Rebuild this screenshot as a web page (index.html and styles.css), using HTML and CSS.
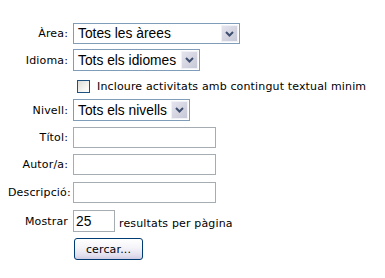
FILE: index.html
```html
<!DOCTYPE html>
<html>
<head>
<meta charset="utf-8">
<link rel="stylesheet" href="styles.css">
</head>
<body>
<form class="search">
  <div class="row r1">
    <label class="lbl">Àrea:</label>
    <div class="select w-area"><span class="val">Totes les àrees</span><span class="arrow"><svg width="9" height="6" viewBox="0 0 9 6"><polyline points="1,1 4.5,4.5 8,1" fill="none" stroke="#3e4f70" stroke-width="2"/></svg></span></div>
  </div>
  <div class="row r2">
    <label class="lbl">Idioma:</label>
    <div class="select w-lang"><span class="val">Tots els idiomes</span><span class="arrow"><svg width="9" height="6" viewBox="0 0 9 6"><polyline points="1,1 4.5,4.5 8,1" fill="none" stroke="#3e4f70" stroke-width="2"/></svg></span></div>
  </div>
  <div class="row r3">
    <span class="lbl"></span>
    <span class="check"></span>
    <span class="chk-text">Incloure activitats amb contingut textual minim</span>
  </div>
  <div class="row r4">
    <label class="lbl">Nivell:</label>
    <div class="select w-level"><span class="val">Tots els nivells</span><span class="arrow"><svg width="9" height="6" viewBox="0 0 9 6"><polyline points="1,1 4.5,4.5 8,1" fill="none" stroke="#3e4f70" stroke-width="2"/></svg></span></div>
  </div>
  <div class="row r5">
    <label class="lbl">Títol:</label>
    <span class="input w-text"></span>
  </div>
  <div class="row r6">
    <label class="lbl">Autor/a:</label>
    <span class="input w-text"></span>
  </div>
  <div class="row r7">
    <label class="lbl">Descripció:</label>
    <span class="input w-text"></span>
  </div>
  <div class="row r8">
    <label class="lbl">Mostrar</label>
    <span class="input w-num">25</span>
    <span class="after">resultats per pàgina</span>
  </div>
  <div class="row r9">
    <span class="lbl"></span>
    <span class="btn">cercar...</span>
  </div>
</form>
</body>
</html>
```
FILE: styles.css
```css
html, body {
  margin: 0;
  padding: 0;
  background: #ffffff;
}
body {
  font-family: "DejaVu Sans", Verdana, sans-serif;
  font-size: 11px;
  letter-spacing: 0.15px;
  color: #000000;
}
.search {
  display: flex;
  flex-direction: column;
  padding: 23px 0 0 8px;
}
.row {
  display: flex;
  align-items: center;
}
.lbl {
  width: 60px;
  margin-right: 5px;
  text-align: right;
  white-space: nowrap;
  flex: none;
}
.r1 { height: 21px; }
.r2 { height: 22px; margin-top: 5px; }
.r3 { height: 13px; margin-top: 9px; }
.r4 { height: 22px; margin-top: 6px; }
.r5 { height: 21px; margin-top: 6px; }
.r6 { height: 21px; margin-top: 6px; }
.r7 { height: 21px; margin-top: 7px; }
.r8 { height: 22px; margin-top: 7px; }
.r9 { height: 22px; margin-top: 6px; }

.select {
  box-sizing: border-box;
  height: 100%;
  border: 1px solid #7f9db9;
  background: #ffffff;
  display: flex;
  align-items: center;
  justify-content: space-between;
  padding: 1px;
  font-family: "Liberation Sans", Arial, sans-serif;
  font-size: 13.8px;
  letter-spacing: 0;
}
.select .val {
  padding-left: 3px;
  white-space: nowrap;
}
.select .arrow {
  box-sizing: border-box;
  width: 17px;
  height: 100%;
  border: 1px solid #f1f2f7;
  background: linear-gradient(135deg, #e3e4ee 0%, #d2d3df 60%, #c8c9d8 100%);
  display: flex;
  align-items: center;
  justify-content: center;
  flex: none;
}
.w-area { width: 167px; }
.w-lang { width: 127px; }
.w-level { width: 117px; }

.check {
  box-sizing: border-box;
  width: 13px;
  height: 13px;
  border: 1px solid #1c5180;
  background: linear-gradient(135deg, #dcdcd7 0%, #f3f3ef 60%, #ffffff 100%);
  margin-left: 4px;
  flex: none;
}
.chk-text {
  margin-left: 7px;
  white-space: nowrap;
}

.input {
  box-sizing: border-box;
  height: 100%;
  border: 1px solid #a5acb2;
  background: #ffffff;
  font-family: "Liberation Sans", Arial, sans-serif;
  font-size: 13.8px;
  letter-spacing: 0;
  display: flex;
  align-items: center;
  padding-left: 2px;
}
.w-text { width: 143px; }
.w-num { width: 42px; }
.after {
  margin-left: 4px;
  margin-top: 4px;
  white-space: nowrap;
}

.btn {
  box-sizing: border-box;
  width: 69px;
  height: 100%;
  margin-left: 1px;
  border: 1px solid #003c74;
  border-radius: 3px;
  background: linear-gradient(180deg, #ffffff 0%, #f4f3f8 45%, #e3e0ef 80%, #cfcbe3 100%);
  display: flex;
  align-items: center;
  justify-content: center;
  font-size: 11px;
}
```
